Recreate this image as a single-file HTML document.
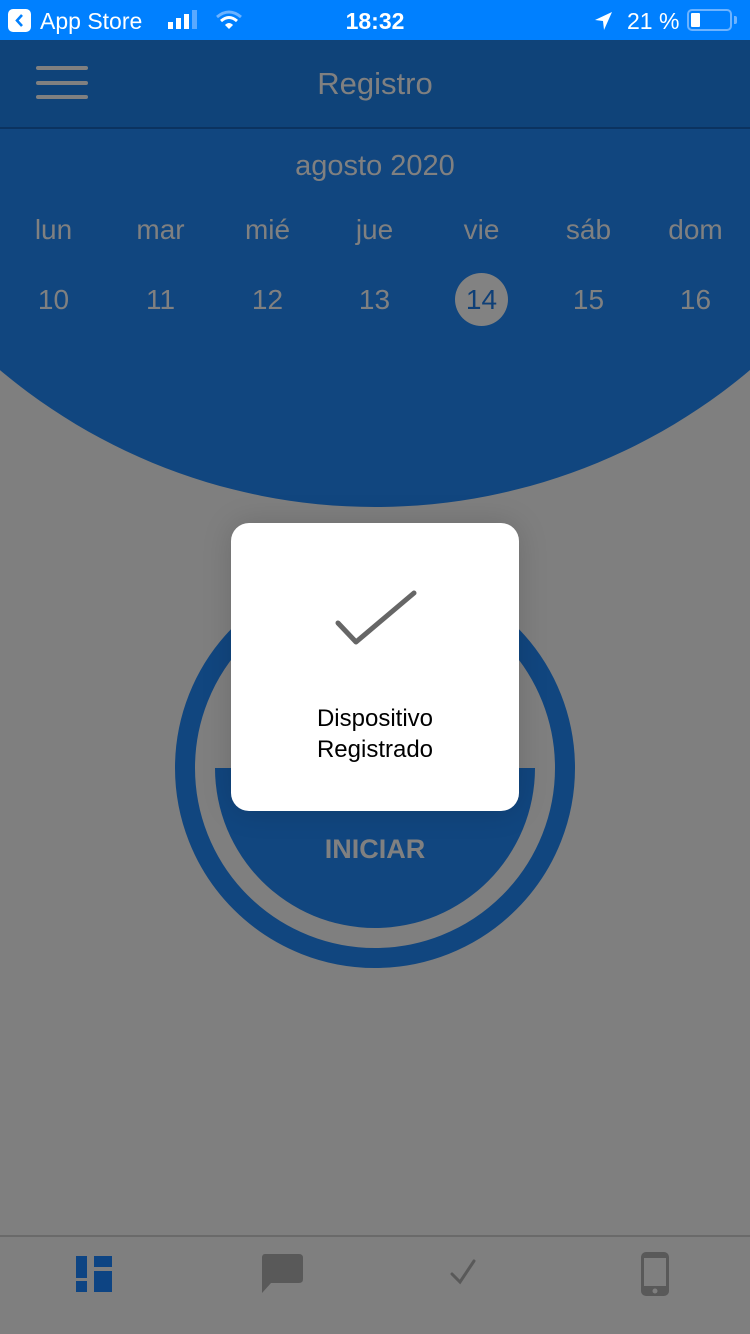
<!DOCTYPE html>
<html><head><meta charset="utf-8"><style>
*{margin:0;padding:0;box-sizing:border-box}
body{width:750px;height:1334px;overflow:hidden;background:#7f7f7f;font-family:"Liberation Sans",sans-serif;position:relative}
.abs{position:absolute}
.sb{top:0;left:0;width:750px;height:40px;background:#0080ff;color:#fff;font-size:23px}
.hdr{top:40px;left:0;width:750px;height:89px;background:#0f4379;border-bottom:2px solid #0b3360}
.arc{left:-207px;top:-657px;width:1164px;height:1164px;border-radius:50%;background:#11467f}
.t{color:#808080;text-align:center;width:107px;font-size:28px}
</style></head><body>
<div class="abs arc"></div>
<div class="abs hdr">
 <div class="abs" style="left:36px;top:26px;width:52px;height:4px;border-radius:2px;background:#808080"></div>
 <div class="abs" style="left:36px;top:41px;width:52px;height:4px;border-radius:2px;background:#808080"></div>
 <div class="abs" style="left:36px;top:55px;width:52px;height:4px;border-radius:2px;background:#808080"></div>
 <div class="abs" style="left:0;width:750px;top:26px;text-align:center;color:#808080;font-size:31px">Registro</div>
</div>
<div class="abs sb">
 <div class="abs" style="left:8px;top:9px;width:23px;height:23px;background:#fff;border-radius:5px"></div>
 <svg class="abs" style="left:8px;top:9px" width="23" height="23"><path d="M14 6 L9 11.5 L14 17" stroke="#0080ff" stroke-width="2.6" fill="none"/></svg>
 <div class="abs" style="left:40px;top:8px">App Store</div>
 <div class="abs" style="left:168px;top:22px;width:5px;height:7px;background:#fff"></div>
 <div class="abs" style="left:176px;top:18px;width:5px;height:11px;background:#fff"></div>
 <div class="abs" style="left:184px;top:14px;width:5px;height:15px;background:#fff"></div>
 <div class="abs" style="left:192px;top:10px;width:5px;height:19px;background:#5aa9ff"></div>
 <svg class="abs" style="left:215px;top:9px" width="28" height="22"><path d="M2 8 Q14 -2 26 8" stroke="#6db3ff" stroke-width="3" fill="none"/><path d="M6 12 Q14 5 22 12" stroke="#fff" stroke-width="3" fill="none"/><path d="M10 16 Q14 12 18 16 L14 20Z" fill="#fff"/></svg>
 <div class="abs" style="left:0;width:750px;top:8px;text-align:center;font-weight:bold">18:32</div>
 <svg class="abs" style="left:594px;top:11px" width="20" height="20"><path d="M18 1 L1 9 L9 10 L10 19Z" fill="#fff"/></svg>
 <div class="abs" style="left:627px;top:8px">21 %</div>
 <div class="abs" style="left:687px;top:9px;width:45px;height:22px;border:2px solid #6db3ff;border-radius:5px"></div>
 <div class="abs" style="left:691px;top:13px;width:9px;height:14px;background:#fff;border-radius:1px"></div>
 <div class="abs" style="left:734px;top:16px;width:3px;height:8px;background:#6db3ff;border-radius:0 2px 2px 0"></div>
</div>
<div class="abs t" style="left:0;width:750px;top:150px;font-size:29px">agosto 2020</div>
<div class="abs t" style="left:0;top:214px">lun</div>
<div class="abs t" style="left:107px;top:214px">mar</div>
<div class="abs t" style="left:214px;top:214px">mié</div>
<div class="abs t" style="left:321px;top:214px">jue</div>
<div class="abs t" style="left:428px;top:214px">vie</div>
<div class="abs t" style="left:535px;top:214px">sáb</div>
<div class="abs t" style="left:642px;top:214px">dom</div>
<div class="abs" style="left:455px;top:273px;width:53px;height:53px;border-radius:50%;background:#828282"></div>
<div class="abs t" style="left:0;top:284px">10</div>
<div class="abs t" style="left:107px;top:284px">11</div>
<div class="abs t" style="left:214px;top:284px">12</div>
<div class="abs t" style="left:321px;top:284px">13</div>
<div class="abs t" style="left:428px;top:284px;color:#0e3f77">14</div>
<div class="abs t" style="left:535px;top:284px">15</div>
<div class="abs t" style="left:642px;top:284px">16</div>
<div class="abs" style="left:175px;top:568px;width:400px;height:400px;border-radius:50%;border:20px solid #11467f"></div>
<div class="abs" style="left:215px;top:768px;width:320px;height:160px;border-radius:0 0 160px 160px;background:#11467f"></div>
<div class="abs" style="left:0;width:750px;top:834px;text-align:center;color:#808080;font-size:27px;font-weight:bold">INICIAR</div>
<div class="abs" style="left:231px;top:523px;width:288px;height:288px;background:#fff;border-radius:18px;box-shadow:0 0 30px rgba(0,0,0,.15)"></div>
<svg class="abs" style="left:330px;top:585px" width="90" height="70"><path d="M8 38 L26 57 L84 8" stroke="#666" stroke-width="5" stroke-linecap="round" stroke-linejoin="round" fill="none"/></svg>
<div class="abs" style="left:231px;width:288px;top:703px;text-align:center;color:#000;font-size:24px;line-height:31px">Dispositivo<br>Registrado</div>
<div class="abs" style="left:0;top:1235px;width:750px;height:2px;background:#6a6a6a"></div>
<svg class="abs" style="left:75px;top:1255px" width="40" height="40"><rect x="1" y="1" width="11" height="22" fill="#0d4483"/><rect x="19" y="1" width="18" height="11" fill="#0d4483"/><rect x="1" y="26" width="11" height="11" fill="#0d4483"/><rect x="19" y="16" width="18" height="21" fill="#0d4483"/></svg>
<svg class="abs" style="left:260px;top:1252px" width="45" height="45"><path d="M5 2 H39 Q43 2 43 6 V27 Q43 31 39 31 H11 L2 41 V6 Q2 2 5 2Z" fill="#595959"/></svg>
<svg class="abs" style="left:450px;top:1258px" width="40" height="32"><path d="M2 16 L10 24 L24 3" stroke="#595959" stroke-width="3" stroke-linecap="round" fill="none"/></svg>
<svg class="abs" style="left:640px;top:1251px" width="30" height="46"><rect x="1" y="1" width="28" height="44" rx="5" fill="#595959"/><rect x="4" y="7" width="22" height="28" fill="#7f7f7f"/><circle cx="15" cy="40" r="2.5" fill="#7f7f7f"/></svg>
</body></html>
